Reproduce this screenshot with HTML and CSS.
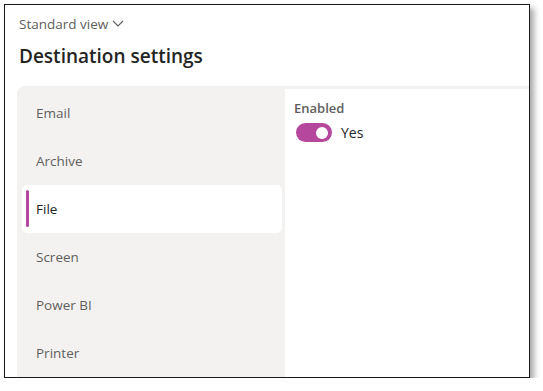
FILE: index.html
```html
<!DOCTYPE html>
<html lang="en">
<head>
    <meta charset="UTF-8">
    <title>Destination settings</title>
    <link rel="stylesheet" href="styles.css">
</head>
<body>
    <div class="frame">
        <div class="header">
            <div class="view-picker">Standard view
                <svg class="chevron" width="12" height="7" viewBox="0 0 12 7"><path d="M1 1l5 5 5-5" fill="none" stroke="#605e5c" stroke-width="1.1"/></svg>
            </div>
            <h1>Destination settings</h1>
        </div>
        <div class="panel">
            <ul class="nav">
                <li>Email</li>
                <li>Archive</li>
                <li class="active">File</li>
                <li>Screen</li>
                <li>Power BI</li>
                <li>Printer</li>
            </ul>
            <div class="content">
                <div class="field-label">Enabled</div>
                <div class="toggle-row">
                    <span class="toggle"><span class="knob"></span></span>
                    <span>Yes</span>
                </div>
            </div>
        </div>
    </div>
</body>
</html>
```
FILE: styles.css
```css
body {
    margin: 0;
    background: #fff;
    font-family: 'Open Sans', 'Noto Sans', Arial, sans-serif;
    color: #242424;
}
.frame {
    margin: 4px 0 0 4px;
    width: 524px;
    height: 372px;
    border: 1px solid #1a1a1a;
    overflow: hidden;
    box-shadow: 4px 4px 6px rgba(0,0,0,0.35);
    display: flex;
    flex-direction: column;
}
.header {
    padding: 9px 0 0 14px;
    height: 81px;
    box-sizing: border-box;
}
.view-picker {
    font-size: 13.5px;
    color: #605e5c;
    line-height: 20px;
    display: flex;
    align-items: center;
    gap: 4px;
}
.chevron {
    margin-top: -2px;
}
h1 {
    margin: 8px 0 0 0;
    font-size: 19px;
    font-weight: 600;
    line-height: 28px;
    color: #242424;
}
.panel {
    flex: 1;
    margin-left: 12px;
    background: #f3f2f1;
    border-top-left-radius: 8px;
    display: flex;
    padding-top: 3px;
}
.nav {
    list-style: none;
    margin: 0;
    padding: 0 3px 0 5px;
    width: 260px;
}
.nav li {
    height: 48px;
    line-height: 48px;
    padding-left: 14px;
    font-size: 13.5px;
    color: #605e5c;
    border-radius: 5px;
    position: relative;
}
.nav li.active {
    background: #fff;
    color: #242424;
}
.nav li.active::before {
    content: "";
    position: absolute;
    left: 4px;
    top: 5px;
    bottom: 6px;
    width: 3px;
    border-radius: 2px;
    background: #b5489c;
}
.content {
    flex: 1;
    background: #fff;
    padding: 10px 9px;
}
.field-label {
    font-size: 13px;
    font-weight: 600;
    color: #605e5c;
    line-height: 18px;
}
.toggle-row {
    display: flex;
    align-items: center;
    gap: 9px;
    margin-top: 6px;
    margin-left: 2px;
    font-size: 14px;
    color: #242424;
}
.toggle {
    width: 36px;
    height: 19px;
    border-radius: 10px;
    background: #b5489c;
    display: flex;
    align-items: center;
    justify-content: flex-end;
    padding-right: 4px;
    box-sizing: border-box;
}
.knob {
    width: 12px;
    height: 12px;
    border-radius: 50%;
    background: #fff;
}
```
